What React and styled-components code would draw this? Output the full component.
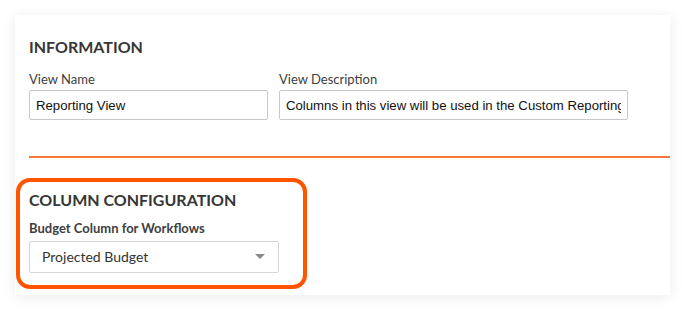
import React from 'react';
import styled, { createGlobalStyle } from 'styled-components';

const GlobalStyle = createGlobalStyle`
  body {
    margin: 0;
    background: #ffffff;
    font-family: Lato, "Open Sans", sans-serif;
  }
`;

const Page = styled.div`
  padding: 15px;
  width: 685px;
  height: 311px;
  box-sizing: border-box;
`;

const Card = styled.section`
  width: 655px;
  height: 280px;
  box-sizing: border-box;
  padding: 22px 0 0 14px;
  background: #fff;
  box-shadow: 0 2px 14px rgba(0, 0, 0, 0.08);
`;

const Title = styled.h2`
  margin: 0;
  font-size: 16px;
  line-height: 20px;
  font-weight: 700;
  color: #363636;
`;

const FieldRow = styled.div`
  display: flex;
  gap: 11px;
  margin-top: 14px;
`;

const Field = styled.label`
  display: flex;
  flex-direction: column;
  width: ${(p) => p.width}px;
  margin-top: ${(p) => p.offset || 0}px;
`;

const Label = styled.span`
  font-size: 13px;
  line-height: 16px;
  color: #404040;
  font-weight: ${(p) => (p.bold ? 700 : 400)};
  margin-bottom: ${(p) => (p.bold ? 5 : 3)}px;
`;

const TextInput = styled.input`
  box-sizing: border-box;
  height: 30px;
  width: 100%;
  padding: 0 6px;
  border: 1px solid #c8c8c8;
  border-radius: 2px;
  font-family: "Liberation Sans", Arial, sans-serif;
  font-size: 13.2px;
  color: #111;
  background: #fff;
  outline: none;
`;

const Divider = styled.div`
  margin-top: 36px;
  height: 1.5px;
  background: #f47b3c;
`;

const Callout = styled.div`
  width: 291px;
  box-sizing: border-box;
  margin: 20px 0 0 -13px;
  padding: 8px 0 12px 9px;
  border: 4px solid #ff5400;
  border-radius: 14px;
`;

const Select = styled.div`
  box-sizing: border-box;
  display: flex;
  align-items: center;
  justify-content: space-between;
  width: 250px;
  height: 32px;
  padding: 0 13px 0 12px;
  border: 1px solid #d6d6d6;
  border-radius: 2px;
  font-size: 14px;
  color: #333;
`;

const Caret = styled.span`
  width: 0;
  height: 0;
  border-left: 5px solid transparent;
  border-right: 5px solid transparent;
  border-top: 5px solid #8a8a8a;
`;

export default function App() {
  return (
    <>
      <GlobalStyle />
      <Page>
        <Card>
          <Title>INFORMATION</Title>
          <FieldRow>
            <Field width={239}>
              <Label>View Name</Label>
              <TextInput defaultValue="Reporting View" />
            </Field>
            <Field width={349}>
              <Label>View Description</Label>
              <TextInput defaultValue="Columns in this view will be used in the Custom Reporting Tool" />
            </Field>
          </FieldRow>
          <Divider />
          <Callout>
            <Title>COLUMN CONFIGURATION</Title>
            <Field width={250} offset={10}>
              <Label bold>Budget Column for Workflows</Label>
              <Select>
                <span>Projected Budget</span>
                <Caret />
              </Select>
            </Field>
          </Callout>
        </Card>
      </Page>
    </>
  );
}
